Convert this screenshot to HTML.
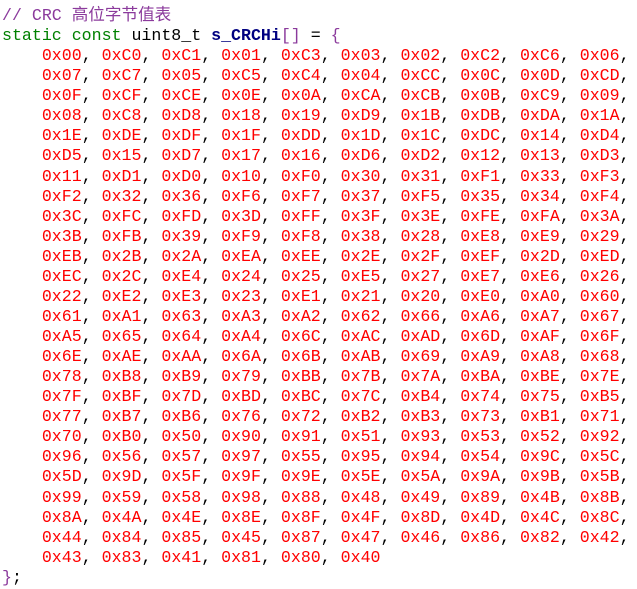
<!DOCTYPE html>
<html><head><meta charset="utf-8"><style>
body{margin:0;background:#fff;width:637px;height:589px;overflow:hidden}
pre{margin:0;position:absolute;left:2px;top:6px;font-family:"Liberation Mono","Noto Sans CJK SC",monospace;font-size:16.6px;line-height:20.07px;color:#000}
.c{color:#8b3a9c}.k{color:#008000}.b{color:#000080;font-weight:bold}.p{color:#8b3a9c}.n{color:#f00}
</style></head><body><pre id="p"><span class="c">// CRC 高位字节值表</span>
<span class="k">static const</span> uint8_t <span class="b">s_CRCHi</span><span class="p">[]</span> = <span class="p">{</span>
</pre>
<script>
var d="00 C0 C1 01 C3 03 02 C2 C6 06 07 C7 05 C5 C4 04 CC 0C 0D CD 0F CF CE 0E 0A CA CB 0B C9 09 08 C8 D8 18 19 D9 1B DB DA 1A 1E DE DF 1F DD 1D 1C DC 14 D4 D5 15 D7 17 16 D6 D2 12 13 D3 11 D1 D0 10 F0 30 31 F1 33 F3 F2 32 36 F6 F7 37 F5 35 34 F4 3C FC FD 3D FF 3F 3E FE FA 3A 3B FB 39 F9 F8 38 28 E8 E9 29 EB 2B 2A EA EE 2E 2F EF 2D ED EC 2C E4 24 25 E5 27 E7 E6 26 22 E2 E3 23 E1 21 20 E0 A0 60 61 A1 63 A3 A2 62 66 A6 A7 67 A5 65 64 A4 6C AC AD 6D AF 6F 6E AE AA 6A 6B AB 69 A9 A8 68 78 B8 B9 79 BB 7B 7A BA BE 7E 7F BF 7D BD BC 7C B4 74 75 B5 77 B7 B6 76 72 B2 B3 73 B1 71 70 B0 50 90 91 51 93 53 52 92 96 56 57 97 55 95 94 54 9C 5C 5D 9D 5F 9F 9E 5E 5A 9A 9B 5B 99 59 58 98 88 48 49 89 4B 8B 8A 4A 4E 8E 8F 4F 8D 4D 4C 8C 44 84 85 45 87 47 46 86 82 42 43 83 41 81 80 40".split(" ");
var h="";
for(var i=0;i<d.length;i+=10){h+="    ";var r=d.slice(i,i+10);for(var j=0;j<r.length;j++){var last=(i+j==d.length-1);h+='<span class="n">0x'+r[j]+'</span>'+(last?'':(j<r.length-1?', ':','));}h+="\n";}
h+='<span class="p">}</span>;';
document.getElementById("p").innerHTML+=h;
</script>
</body></html>
